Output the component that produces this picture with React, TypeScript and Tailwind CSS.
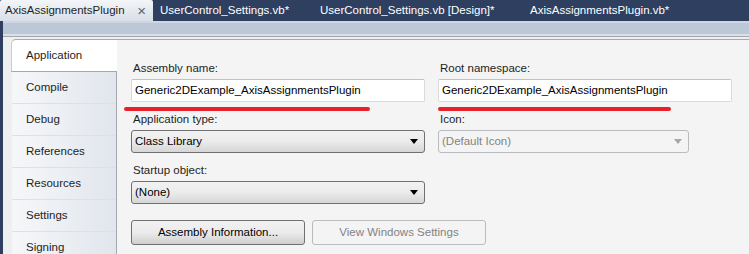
import React from 'react';

const font = { fontFamily: '"Segoe UI", "Liberation Sans", Arial, sans-serif' };

const sideItems = ['Compile', 'Debug', 'References', 'Resources', 'Settings', 'Signing'];

function DocTab({ label, active, width }: { label: string; active?: boolean; width: string }) {
    if (active) {
        return (
            <div className={`${width} h-[21px] flex items-center justify-between pl-[5px] pr-[7px] bg-gradient-to-b from-[#f3f5f8] to-[#d9dfe8] text-[#1e1e1e] rounded-t-[2px] shrink-0`}>
                <span>{label}</span>
                <span className="text-[#5a6470] text-[15px] leading-none">×</span>
            </div>
        );
    }
    return <div className={`${width} h-[21px] flex items-center pl-[7px] text-white shrink-0`}>{label}</div>;
}

function Label({ children }: { children: React.ReactNode }) {
    return <div className="h-[15px] leading-[15px] mb-[3px] pl-[2px] text-[#1e1e1e]">{children}</div>;
}

function TextBox({ value }: { value: string }) {
    return (
        <div className="h-[23px] bg-white border border-[#dadada] border-t-[#c2c2c2] rounded-[2px] flex items-center pl-[3px] text-black">
            {value}
        </div>
    );
}

function Combo({ value, disabled, width }: { value: string; disabled?: boolean; width: string }) {
    return (
        <div
            className={`${width} h-[23px] rounded-[3px] border flex items-center justify-between pl-[3px] pr-[6px] ${
                disabled
                    ? 'bg-[#f4f4f4] border-[#b8bcbf] text-[#838383]'
                    : 'bg-gradient-to-b from-[#f2f2f2] via-[#ebebeb] to-[#d6d6d6] border-[#707070] text-black'
            }`}
        >
            <span>{value}</span>
            <svg width="8" height="5" viewBox="0 0 8 5">
                <path d="M0 0 H8 L4 5 Z" fill={disabled ? '#a7a7a7' : '#000'} />
            </svg>
        </div>
    );
}

export default function App() {
    return (
        <div className="w-[749px] h-[254px] overflow-hidden bg-[#2e3f5f] flex flex-col text-[11.5px]" style={font}>
            {/* document tabs */}
            <div className="h-[21px] flex items-end shrink-0">
                <DocTab label="AxisAssignmentsPlugin" active width="w-[153px]" />
                <DocTab label="UserControl_Settings.vb*" width="w-[160px]" />
                <DocTab label="UserControl_Settings.vb [Design]*" width="w-[210px]" />
                <DocTab label="AxisAssignmentsPlugin.vb*" width="w-[180px]" />
            </div>

            <div className="flex-1 flex ml-[3px] flex-col bg-[#eeeff1]">
                <div className="h-[2px] bg-[#cfd6e1] shrink-0" />
                <div className="h-[11px] bg-[#bcc7d8] shrink-0" />
                <div className="h-[2px] bg-[#dcdfe4] shrink-0" />
                <div className="h-[1px] bg-[#a3a8b0] shrink-0" />

                <div className="flex-1 flex pl-[8px] pt-[2px]">
                    {/* property page tabs */}
                    <div className="w-[105px] flex flex-col">
                        <div className="h-[33px] flex items-center pl-[14px] bg-white border border-[#a5a9ae] border-r-0 border-l-[#e6c98a] rounded-tl-[5px] text-[#1e1e1e] mr-[-1px] relative z-10">
                            Application
                        </div>
                        {sideItems.map((item) => (
                            <div
                                key={item}
                                className="h-[32px] flex items-center pl-[14px] ml-[1px] bg-gradient-to-r from-[#f6f7f9] to-[#e1e6ed] border-b border-[#dde1e7] text-[#1e1e1e]"
                            >
                                {item}
                            </div>
                        ))}
                    </div>

                    {/* application page */}
                    <div className="flex-1 relative bg-[#f4f4f5] border-t border-l border-[#a5a9ae] pl-[14px] pt-[21px]">
                        <div className="flex gap-[13px]">
                            <div className="w-[294px] flex flex-col">
                                <Label>Assembly name:</Label>
                                <TextBox value="Generic2DExample_AxisAssignmentsPlugin" />
                                <div className="h-[10px]" />
                                <Label>Application type:</Label>
                                <Combo value="Class Library" width="w-[294px]" />
                                <div className="h-[10px]" />
                                <Label>Startup object:</Label>
                                <Combo value="(None)" width="w-[294px]" />
                                <div className="h-[16px]" />
                                <div className="flex gap-[7px] w-[360px]">
                                    <div className="w-[174px] h-[25px] shrink-0 rounded-[3px] border border-[#707070] bg-gradient-to-b from-[#f2f2f2] via-[#ebebeb] to-[#cfcfcf] flex items-center justify-center text-black">
                                        Assembly Information...
                                    </div>
                                    <div className="w-[174px] h-[25px] shrink-0 rounded-[3px] border border-[#b8bcbf] bg-[#f4f4f4] flex items-center justify-center text-[#838383]">
                                        View Windows Settings
                                    </div>
                                </div>
                            </div>
                            <div className="w-[294px] flex flex-col">
                                <Label>Root namespace:</Label>
                                <TextBox value="Generic2DExample_AxisAssignmentsPlugin" />
                                <div className="h-[10px]" />
                                <Label>Icon:</Label>
                                <Combo value="(Default Icon)" disabled width="w-[251px]" />
                            </div>
                        </div>

                        {/* red annotation strokes */}
                        <div className="absolute left-[7px] top-[67px] w-[246px] h-[4px] rounded-full bg-[#e8202a]" />
                        <div className="absolute left-[321px] top-[67px] w-[233px] h-[4px] rounded-full bg-[#e8202a]" />
                    </div>
                </div>
            </div>
        </div>
    );
}
